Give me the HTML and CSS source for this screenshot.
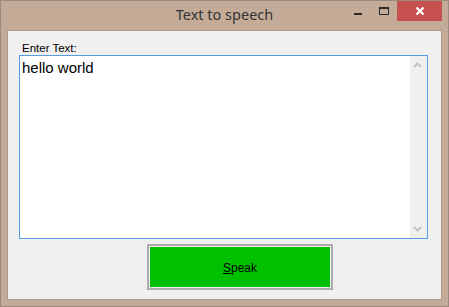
FILE: index.html
```html
<!DOCTYPE html>
<html lang="en">
<head>
    <meta charset="UTF-8">
    <meta name="viewport" content="width=device-width, initial-scale=1.0">
    <title>Text to speech</title>
    <link rel="stylesheet" href="styles.css">
</head>
<body>
    <div class="window">
        <div class="titlebar">
            <div></div>
            <div class="title">Text to speech</div>
            <div class="controls">
                <div class="ctl min-btn"><span class="min-icon"></span></div>
                <div class="ctl max-btn"><span class="max-icon"></span></div>
                <div class="ctl close-btn">
                    <svg width="10" height="10" viewBox="0 0 10 10">
                        <path d="M1.5 1.5 L8.5 8.5 M8.5 1.5 L1.5 8.5" stroke="#fff" stroke-width="2.2" fill="none"/>
                    </svg>
                </div>
            </div>
        </div>
        <div class="client">
            <label class="field-label" for="speechText">Enter Text:</label>
            <div class="textbox">
                <div class="text-content" id="speechText">hello world</div>
                <div class="scrollbar">
                    <svg width="17" height="17" viewBox="0 0 17 17">
                        <polyline points="4,11 7.5,7.5 11,11" stroke="#c2c2c2" stroke-width="2" fill="none"/>
                    </svg>
                    <svg width="17" height="17" viewBox="0 0 17 17">
                        <polyline points="4,6 7.5,9.5 11,6" stroke="#c2c2c2" stroke-width="2" fill="none"/>
                    </svg>
                </div>
            </div>
            <button type="button" class="speak-btn"><span class="speak-face"><u>S</u>peak</span></button>
        </div>
    </div>
</body>
</html>
```

FILE: styles.css
```css
body {
    margin: 0;
    background: #c3ab98;
    font-family: "Liberation Sans", Arial, sans-serif;
}
.window {
    width: 449px;
    height: 307px;
    box-sizing: border-box;
    border: 1px solid #9d8a7b;
    background: #c3ab98;
    padding: 0 6px 6px 6px;
    display: flex;
    flex-direction: column;
}
.titlebar {
    height: 29px;
    display: grid;
    grid-template-columns: 1fr auto 1fr;
    align-items: start;
}
.title {
    font-family: "Noto Sans", sans-serif;
    font-size: 14.5px;
    line-height: 17px;
    color: #333333;
    padding-top: 5px;
}
.controls {
    display: flex;
    justify-content: flex-end;
}
.ctl {
    height: 20px;
    display: flex;
    justify-content: center;
    align-items: center;
}
.min-btn {
    width: 27px;
}
.max-btn {
    width: 26px;
}
.close-btn {
    width: 45px;
    background: #c75050;
}
.min-icon {
    width: 8px;
    height: 2px;
    margin-top: 6px;
    background: #2b2b2b;
}
.max-icon {
    width: 10px;
    height: 8px;
    box-sizing: border-box;
    border: 1px solid #2b2b2b;
    border-top-width: 2px;
}
.close-btn svg {
    display: block;
    margin-left: 1px;
}
.client {
    flex: 1;
    background: #f0f0f0;
    border: 1px solid #ab998b;
    display: flex;
    flex-direction: column;
    align-items: flex-start;
}
.field-label {
    font-size: 11.5px;
    line-height: 13px;
    color: #000;
    margin: 11px 0 0 14px;
}
.textbox {
    width: 409px;
    height: 184px;
    box-sizing: border-box;
    margin-left: 11px;
    border: 1px solid #569de5;
    background: #fff;
    display: flex;
}
.text-content {
    flex: 1;
    font-size: 15px;
    line-height: 17px;
    color: #000;
    padding: 3px 0 0 2px;
}
.scrollbar {
    width: 17px;
    background: #f0f0f0;
    display: flex;
    flex-direction: column;
    justify-content: space-between;
}
.scrollbar svg {
    display: block;
}
.speak-btn {
    width: 186px;
    height: 46px;
    box-sizing: border-box;
    margin: 5px 0 0 139px;
    border: 2px solid #adadad;
    padding: 1px;
    background: #f0f0f0;
    display: flex;
    cursor: pointer;
}
.speak-face {
    flex: 1;
    background: #00c000;
    display: flex;
    justify-content: center;
    align-items: center;
    padding-top: 2px;
    font-family: "Liberation Sans", Arial, sans-serif;
    font-size: 12px;
    color: #000;
}
```
